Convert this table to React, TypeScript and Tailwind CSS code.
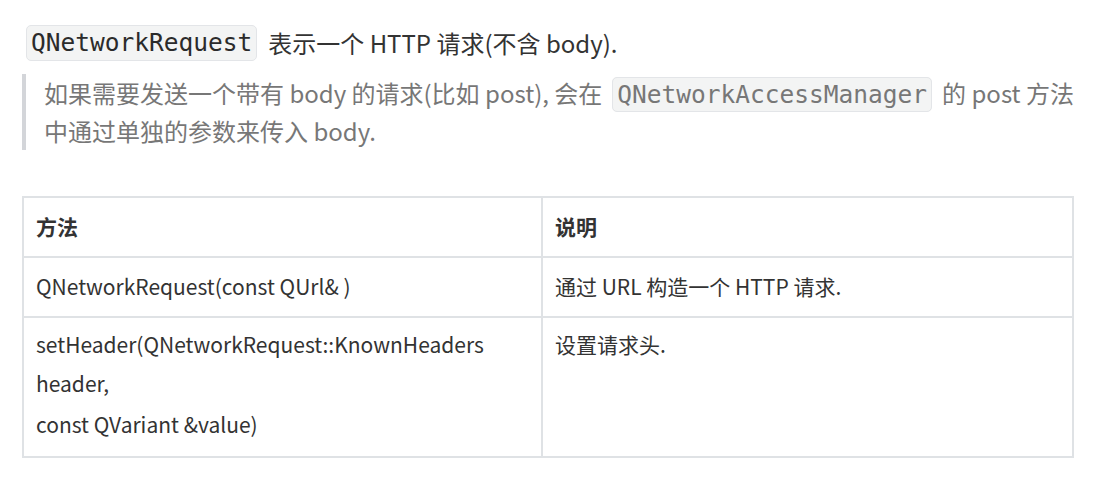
export default function App() {
  const sans = "font-['Noto_Sans_CJK_SC','Noto_Sans',sans-serif]";
  return (
    <div className={`w-[1120px] h-[481px] bg-white ${sans} text-[#333333]`}>
      <div className="pl-[22px] w-[1080px] pt-[25px]">
        <p className="text-[24px] leading-[36px] flex items-center pl-[4px]">
          <code className="font-['DejaVu_Sans_Mono',monospace] text-[24.5px] leading-[34px] bg-[#f3f4f4] border border-[#e3e5e8] rounded-[5px] px-[4px] mr-[11px] text-[#2b2b2b]">QNetworkRequest</code>
          <span>表示一个 HTTP 请求(不含 body).</span>
        </p>
        <blockquote className="mt-[13px] border-l-[4px] border-[#d3d5d9] pl-[18px] text-[24px] leading-[38px] text-[#777777]">
          如果需要发送一个带有 body 的请求(比如 post), 会在
          <code className="font-['DejaVu_Sans_Mono',monospace] text-[24.5px] leading-[1] bg-[#f3f4f4] border border-[#e3e5e8] rounded-[5px] px-[4px] py-[2px] mx-[10px]">QNetworkAccessManager</code>
          的 post 方法中通过单独的参数来传入 body.
        </blockquote>
        <table className="mt-[46px] w-[1052px] border-collapse text-[21px] text-[#333333]">
          <thead>
            <tr className="h-[60px]">
              <th className="w-[519px] border-2 border-[#dfe2e5] px-[12px] text-left font-bold">方法</th>
              <th className="border-2 border-[#dfe2e5] px-[12px] text-left font-bold">说明</th>
            </tr>
          </thead>
          <tbody>
            <tr className="h-[60px]">
              <td className="border-2 border-[#dfe2e5] px-[12px]">QNetworkRequest(const QUrl&amp; )</td>
              <td className="border-2 border-[#dfe2e5] px-[12px]">通过 URL 构造一个 HTTP 请求.</td>
            </tr>
            <tr className="h-[140px]">
              <td className="border-2 border-[#dfe2e5] px-[12px] pt-[7px] pb-[9px] align-top leading-[39px]">
                setHeader(QNetworkRequest::KnownHeaders header,
                <span className="block mt-[2px]">const QVariant &amp;value)</span>
              </td>
              <td className="border-2 border-[#dfe2e5] px-[12px] pt-[7px] pb-[9px] align-top leading-[39px]">设置请求头.</td>
            </tr>
          </tbody>
        </table>
      </div>
    </div>
  );
}
